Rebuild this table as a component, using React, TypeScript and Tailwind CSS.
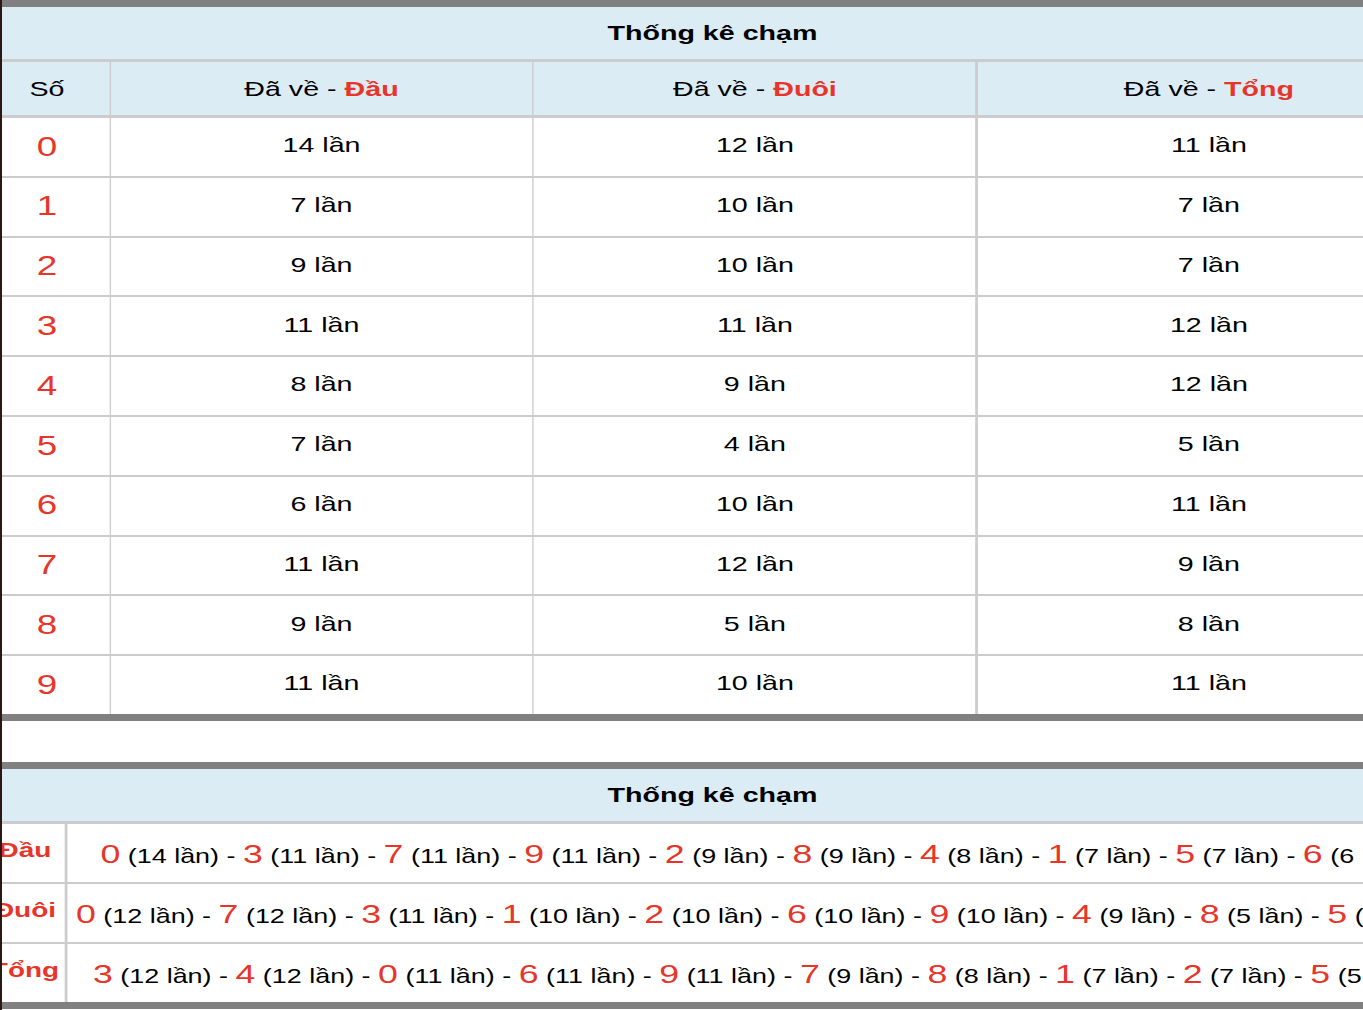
import React from 'react';

// Counts per digit 0..9
const DAU = [14, 7, 9, 11, 8, 7, 6, 11, 9, 11];
const DUOI = [12, 10, 10, 11, 9, 4, 10, 12, 5, 10];
const TONG = [11, 7, 7, 12, 12, 5, 11, 9, 8, 11];

const COLS = 'grid-cols-[91px_308.8px_324.2px_339px]';

function ranked(counts: number[]) {
  return counts
    .map((c, d) => ({ d, c }))
    .sort((a, b) => b.c - a.c || a.d - b.d);
}

function Title() {
  return (
    <div className="border-t-[7px] border-[#808080]">
      <div className="flex h-[52px] items-center justify-center bg-[#dcecf5] text-[21px] font-bold text-black">
        Thống kê chạm
      </div>
    </div>
  );
}

function HeadCell({ label }: { label?: string }) {
  return (
    <div className="flex items-center justify-center bg-[#dcecf5] text-[21px] text-black">
      {label ? (
        <span>
          Đã về - <b className="text-[#e8352a]">{label}</b>
        </span>
      ) : (
        'Số'
      )}
    </div>
  );
}

function TopTable() {
  return (
    <div>
      <Title />
      <div className={`grid h-[59px] ${COLS} gap-x-[1.5px] border-y-[3px] border-[#cccccc] bg-[#cccccc]`}>
        <HeadCell />
        <HeadCell label="Đầu" />
        <HeadCell label="Đuôi" />
        <HeadCell label="Tổng" />
      </div>
      <div className={`grid ${COLS} auto-rows-[57.8px] gap-x-[1.5px] gap-y-[2px] bg-[#cccccc]`}>
        {DAU.map((_, i) => (
          <React.Fragment key={i}>
            <div className="flex items-center justify-center bg-white text-[27px] text-[#e8352a]">{i}</div>
            <div className="flex items-center justify-center bg-white pb-[4px] text-[21px] text-black">{DAU[i]} lần</div>
            <div className="flex items-center justify-center bg-white pb-[4px] text-[21px] text-black">{DUOI[i]} lần</div>
            <div className="flex items-center justify-center bg-white pb-[4px] text-[21px] text-black">{TONG[i]} lần</div>
          </React.Fragment>
        ))}
      </div>
      <div className="h-[7px] bg-[#808080]" />
    </div>
  );
}

function SummaryRow({ label, counts }: { label: string; counts: number[] }) {
  const items = ranked(counts);
  return (
    <div className="grid grid-cols-[58.7px_1007.3px] gap-x-[1.5px] bg-[#cccccc]">
      <div className="flex h-[58px] items-center justify-center bg-white pb-[6px] text-[20.5px] font-bold whitespace-nowrap text-[#e8352a]">
        {label}
      </div>
      <div className="flex items-center justify-center bg-white px-[6px] pt-[4px] whitespace-nowrap text-[19.75px] text-black">
        <span>
          {items.map((it, idx) => (
            <React.Fragment key={it.d}>
              <span className="text-[26.2px] text-[#e8352a]">{it.d}</span> ({it.c} lần)
              {idx < items.length - 1 ? ' - ' : ''}
            </React.Fragment>
          ))}
        </span>
      </div>
    </div>
  );
}

function BottomTable() {
  return (
    <div>
      <Title />
      <div className="flex flex-col gap-y-[2px] border-t-[3px] border-[#cccccc] bg-[#cccccc]">
        <SummaryRow label="Đầu" counts={DAU} />
        <SummaryRow label="Đuôi" counts={DUOI} />
        <SummaryRow label="Tổng" counts={TONG} />
      </div>
      <div className="h-[7px] bg-[#808080]" />
    </div>
  );
}

export default function App() {
  return (
    <div className="flex h-[1010px] overflow-hidden bg-white font-['Liberation_Sans',Arial,sans-serif]">
      <div className="w-[2px] shrink-0 bg-[#2b1713]" />
      <div className="min-w-0 flex-1 overflow-hidden">
        {/* the reference is stretched sideways, so the page is laid out narrow and widened */}
        <div className="w-[1000px] origin-top-left scale-x-[1.363]">
          <div className="-ml-[12.5px] flex w-[1067.5px] flex-col gap-[41px]">
            <TopTable />
            <BottomTable />
          </div>
        </div>
      </div>
    </div>
  );
}
